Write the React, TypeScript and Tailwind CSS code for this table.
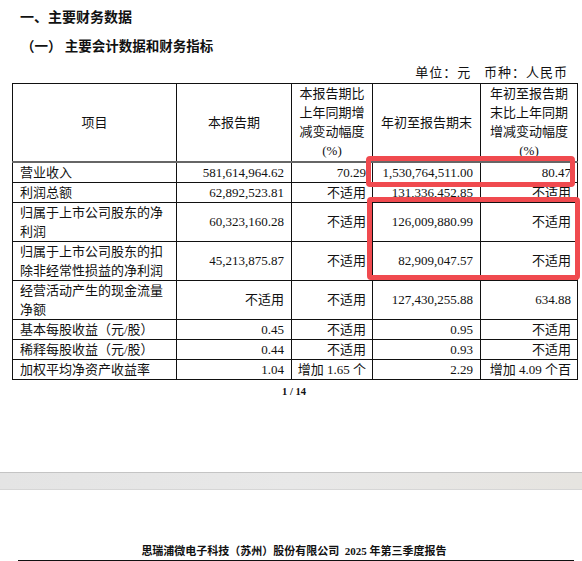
import React from "react";

const serif = "font-['Liberation_Serif','Noto_Sans_CJK_SC',serif]";

type Row = {
  name: string[];
  cur: string;
  curChg: string;
  ytd: string;
  ytdChg: string;
  tall?: boolean;
};

const rows: Row[] = [
  { name: ["营业收入"], cur: "581,614,964.62", curChg: "70.29", ytd: "1,530,764,511.00", ytdChg: "80.47" },
  { name: ["利润总额"], cur: "62,892,523.81", curChg: "不适用", ytd: "131,336,452.85", ytdChg: "不适用" },
  { name: ["归属于上市公司股东的净", "利润"], cur: "60,323,160.28", curChg: "不适用", ytd: "126,009,880.99", ytdChg: "不适用", tall: true },
  { name: ["归属于上市公司股东的扣", "除非经常性损益的净利润"], cur: "45,213,875.87", curChg: "不适用", ytd: "82,909,047.57", ytdChg: "不适用", tall: true },
  { name: ["经营活动产生的现金流量", "净额"], cur: "不适用", curChg: "不适用", ytd: "127,430,255.88", ytdChg: "634.88", tall: true },
  { name: ["基本每股收益（元/股）"], cur: "0.45", curChg: "不适用", ytd: "0.95", ytdChg: "不适用" },
  { name: ["稀释每股收益（元/股）"], cur: "0.44", curChg: "不适用", ytd: "0.93", ytdChg: "不适用" },
  { name: ["加权平均净资产收益率"], cur: "1.04", curChg: "增加 1.65 个", ytd: "2.29", ytdChg: "增加 4.09 个百" },
];

const cell = "border border-[#111] align-middle whitespace-nowrap overflow-hidden p-0";

export default function App() {
  return (
    <div className={`relative w-[582px] h-[561px] overflow-hidden bg-white text-[#111] ${serif}`}>
      {/* page 1 */}
      <div className="h-[472px] pt-[8px]">
        <div className="pl-[20px] text-[14px] leading-[20px] font-bold">一、主要财务数据</div>
        <div className="pl-[21px] mt-[9px] text-[13.5px] leading-[20px] font-bold">（一）&nbsp;主要会计数据和财务指标</div>
        <div className="mt-[6px] pr-[14px] text-right text-[13px] leading-[20px] tracking-[1px]">
          单位：元&nbsp;&nbsp;&nbsp;币种：人民币
        </div>
        <table className="ml-[12px] w-[565px] border-collapse table-fixed text-[13px] leading-[19px]">
          <colgroup>
            <col className="w-[164px]" />
            <col className="w-[115px]" />
            <col className="w-[81px]" />
            <col className="w-[108px]" />
            <col className="w-[97px]" />
          </colgroup>
          <thead>
            <tr className="h-[78px] border-b-2 border-b-[#666]">
              <th className={`${cell} font-normal text-center`}>项目</th>
              <th className={`${cell} font-normal text-center`}>本报告期</th>
              <th className={`${cell} font-normal text-center`}>
                本报告期比
                <br />
                上年同期增
                <br />
                减变动幅度
                <br />
                (%)
              </th>
              <th className={`${cell} font-normal text-center`}>年初至报告期末</th>
              <th className={`${cell} font-normal text-center`}>
                年初至报告期
                <br />
                末比上年同期
                <br />
                增减变动幅度
                <br />
                (%)
              </th>
            </tr>
          </thead>
          <tbody>
            {rows.map((r) => (
              <tr key={r.name.join("")} className={r.tall ? "h-[39px]" : "h-[20px]"}>
                <td className={`${cell} text-left pl-[7px]`}>
                  {r.name.map((n, i) => (
                    <div key={i}>{n}</div>
                  ))}
                </td>
                <td className={`${cell} text-right pr-[7px]`}>{r.cur}</td>
                <td className={`${cell} text-right pr-[6px]`}>{r.curChg}</td>
                <td className={`${cell} text-right pr-[7px]`}>{r.ytd}</td>
                <td className={`${cell} text-right pr-[6px]`}>{r.ytdChg}</td>
              </tr>
            ))}
          </tbody>
        </table>
        <div className="mt-[5px] w-[588px] text-center text-[10.5px] leading-[14px] font-bold">1 / 14</div>
      </div>

      {/* gap between pages */}
      <div className="h-[18px] border-t border-t-[#c4c4c4] border-b border-b-[#d6d6d6] bg-gradient-to-r from-[#e4e4e4] via-[#e8e8e8] to-[#e6e4e0]" />

      {/* page 2 header */}
      <div className="pt-[54px]">
        <div className="w-[588px] text-center text-[11px] leading-[14px] font-bold">
          思瑞浦微电子科技（苏州）股份有限公司&nbsp;&nbsp;2025&nbsp;年第三季度报告
        </div>
        <div className="ml-[18px] mt-[2px] w-[556px] h-[1.5px] bg-[#111]" />
      </div>

      {/* red annotation boxes */}
      <div className="absolute left-[366px] top-[156px] w-[209px] h-[31px] border-[5px] border-[#f04a4f] rounded-[4px]" />
      <div className="absolute left-[367px] top-[197px] w-[213px] h-[83px] border-[5px] border-[#f04a4f] rounded-[4px]" />
    </div>
  );
}
